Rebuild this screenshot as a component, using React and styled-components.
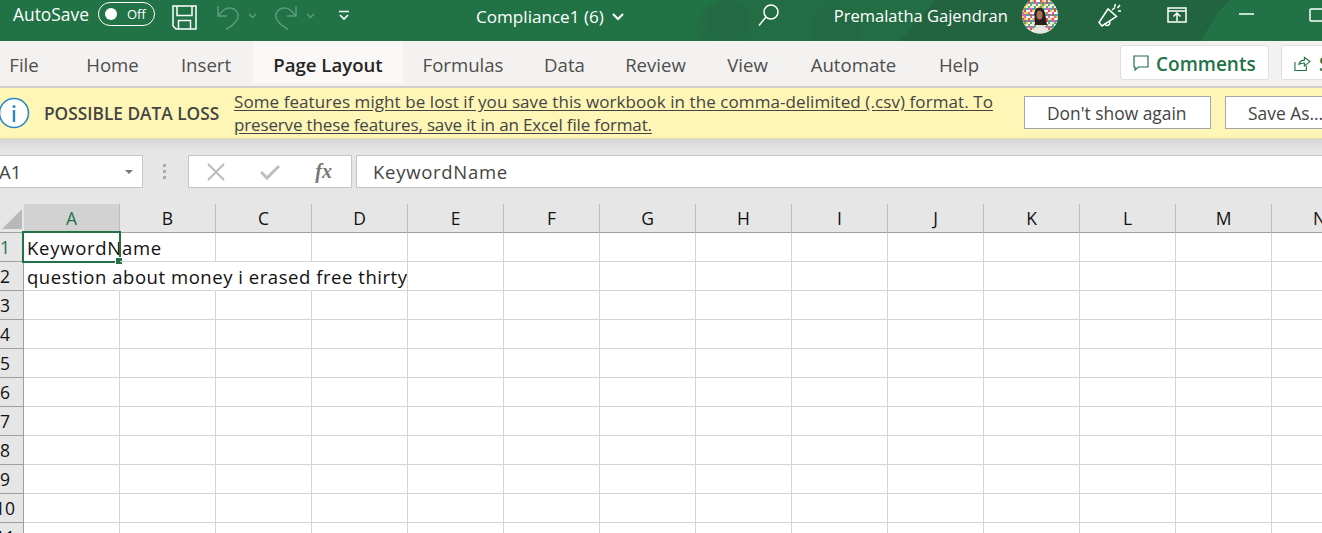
import React from "react";
import styled, { createGlobalStyle } from "styled-components";

const Global = createGlobalStyle`
  html, body { margin: 0; padding: 0; background: #fff; overflow: hidden; }
  #root { width: 1322px; height: 533px; overflow: hidden; }
  * { box-sizing: border-box; }
`;

const Page = styled.div`
  width: 1322px;
  height: 533px;
  overflow: hidden;
  display: flex;
  flex-direction: column;
  font-family: "Open Sans", "Noto Sans", "Liberation Sans", sans-serif;
`;

const TitleBar = styled.header`
  position: relative;
  flex: none;
  height: 41px;
  background: #217346;
  color: #fff;
  display: flex;
  align-items: flex-start;
  overflow: hidden;
`;
const TitleArt = styled.svg`
  position: absolute;
  inset: 0;
  width: 1322px;
  height: 41px;
`;
const TitleItem = styled.div`
  position: relative;
  flex: none;
  display: flex;
  align-items: center;
  margin-left: ${(p) => p.$left}px;
  margin-top: ${(p) => p.$top || 0}px;
  line-height: 1;
`;
const TitleText = styled.span`
  font-size: ${(p) => p.$size || 15}px;
  white-space: nowrap;
  color: #fff;
`;
const Toggle = styled.div`
  width: 57px;
  height: 24px;
  border: 1.5px solid #fff;
  border-radius: 12px;
  display: flex;
  align-items: center;
  padding-left: 6px;
  font-size: 13px;
  color: #fff;
`;
const Knob = styled.span`
  width: 12px;
  height: 12px;
  border-radius: 50%;
  background: #fff;
  margin-right: 10px;
`;

const Tabs = styled.nav`
  flex: none;
  height: 47px;
  background: #f3f2f1;
  border-bottom: 2px solid #d2d0ce;
  display: flex;
  align-items: flex-start;
`;
const Tab = styled.div`
  flex: none;
  height: 42px;
  width: ${(p) => p.$w}px;
  margin-left: ${(p) => p.$left}px;
  display: flex;
  align-items: center;
  justify-content: center;
  font-size: 18.6px;
  padding-top: 4px;
  font-weight: ${(p) => (p.$active ? 600 : 400)};
  color: ${(p) => (p.$active ? "#252423" : "#4f4e4d")};
  background: ${(p) => (p.$active ? "#f9f8f7" : "transparent")};
`;
const RibbonButton = styled.div`
  flex: none;
  margin-top: 4px;
  margin-left: ${(p) => p.$left}px;
  width: ${(p) => p.$w}px;
  height: 35px;
  background: #fff;
  border: 1px solid #e1dfdd;
  border-radius: 3px;
  display: flex;
  align-items: center;
  padding: 3px 0 0 12px;
  gap: ${(p) => p.$gap}px;
  font-size: 19px;
  font-weight: 600;
  color: #217346;
  & > svg {
    margin-top: -3px;
  }
`;

const Banner = styled.section`
  flex: none;
  height: 51px;
  background: #fdf6b7;
  border-bottom: 1px solid #e4dea6;
  display: flex;
  align-items: center;
  color: #444;
`;
const InfoMark = styled.svg`
  flex: none;
  width: 32px;
  height: 32px;
  margin-left: -2px;
`;
const BannerTitle = styled.strong`
  flex: none;
  margin-left: 14px;
  width: 190px;
  font-size: 17.3px;
  font-weight: 600;
  white-space: nowrap;
  color: #444;
`;
const BannerLink = styled.div`
  flex: none;
  width: 790px;
  font-size: 17px;
  letter-spacing: 0.08px;
  line-height: 23px;
  white-space: nowrap;
  text-decoration: underline;
  text-underline-offset: 2px;
  color: #444;
`;
const TightLine = styled.span`
  letter-spacing: -0.15px;
`;
const BannerButton = styled.div`
  flex: none;
  height: 33px;
  width: ${(p) => p.$w}px;
  margin-right: 14px;
  margin-top: -1px;
  padding-left: 22px;
  background: #fff;
  border: 1px solid #a6a6a6;
  display: flex;
  align-items: center;
  font-size: 17.4px;
  color: #444;
`;

const FormulaBar = styled.section`
  flex: none;
  height: 65px;
  background: linear-gradient(#d4d4d4 0, #e6e6e6 12px);
  padding-top: 16px;
  display: flex;
  align-items: flex-start;
`;
const Field = styled.div`
  flex: none;
  height: 33px;
  background: #fff;
  border: 1px solid #c6c6c6;
  display: flex;
  align-items: center;
  font-size: 18.5px;
  color: #444;
`;
const NameBox = styled(Field)`
  width: 144px;
  margin-left: -1px;
  border-left: none;
  justify-content: space-between;
  padding-right: 9px;
`;
const Caret = styled.span`
  width: 0;
  height: 0;
  border-left: 4px solid transparent;
  border-right: 4px solid transparent;
  border-top: 4px solid #777;
`;
const Grip = styled.span`
  flex: none;
  width: 42px;
  margin-right: 3px;
  height: 33px;
  display: flex;
  flex-direction: column;
  align-items: center;
  justify-content: center;
  gap: 3px;
  & > i {
    width: 3px;
    height: 3px;
    background: #aaa;
  }
`;
const FormulaButtons = styled(Field)`
  width: 164px;
  padding: 0 19px 0 18px;
  justify-content: space-between;
`;
const Fx = styled.span`
  font-family: "Liberation Serif", serif;
  font-style: italic;
  font-weight: 700;
  font-size: 20px;
  color: #777;
`;
const FormulaInput = styled(Field)`
  width: 970px;
  margin-left: 4px;
  border-right: none;
  padding-left: 16px;
  letter-spacing: 0.72px;
`;

const Sheet = styled.section`
  flex: 1;
  background: #fff;
  margin-left: -13px;
  font-size: 18.5px;
  color: #111;
  overflow: hidden;
`;
const Row = styled.div`
  display: flex;
  height: 29px;
`;
const HeadRow = styled(Row)`
  background: #e6e6e6;
`;
const Corner = styled.div`
  flex: none;
  width: 37px;
  height: 29px;
  border-bottom: 1px solid #9f9f9f;
  display: flex;
  justify-content: flex-end;
  align-items: flex-end;
  padding: 0 2px 3px 0;
`;
const ColHead = styled.div`
  flex: none;
  width: 96px;
  height: 29px;
  border-bottom: 1px solid #9f9f9f;
  border-right: 1px solid #bdbdbd;
  display: flex;
  align-items: center;
  justify-content: center;
  font-size: 17.5px;
  background: ${(p) => (p.$active ? "#d2d2d2" : "transparent")};
  color: ${(p) => (p.$active ? "#217346" : "#111")};
`;
const RowHead = styled.div`
  flex: none;
  width: 37px;
  height: 29px;
  background: #e6e6e6;
  border-right: 1px solid #9f9f9f;
  border-bottom: 1px solid #9f9f9f;
  display: flex;
  align-items: center;
  justify-content: center;
  font-size: 17.5px;
  color: ${(p) => (p.$active ? "#217346" : "#111")};
`;
const Cell = styled.div`
  position: relative;
  flex: none;
  width: 96px;
  height: 29px;
  border-bottom: 1px solid #d4d4d4;
  border-right: 1px solid ${(p) => (p.$open ? "transparent" : "#d4d4d4")};
  padding-left: 3px;
  display: flex;
  align-items: center;
  white-space: nowrap;
  letter-spacing: ${(p) => p.$spacing || 0.54}px;
`;
const Selection = styled.div`
  position: absolute;
  left: -2px;
  top: -2px;
  width: 99px;
  height: 32px;
  border: 2px solid #217346;
  &::after {
    content: "";
    position: absolute;
    right: -3px;
    bottom: -3px;
    width: 6px;
    height: 6px;
    background: #217346;
    outline: 1px solid #fff;
  }
`;

const Icon = styled.svg`
  display: block;
  flex: none;
  fill: none;
  stroke: ${(p) => p.$color || "#fff"};
  stroke-width: ${(p) => p.$sw || 1.5};
`;

const PALETTE = ["#d8343f", "#f2c230", "#2f8fd0", "#3aa35a", "#ffffff", "#e57a2c", "#d94f9b", "#f5e6c8", "#ffffff"];
const dots = [];
for (let y = 0; y < 18; y++) {
  for (let x = 0; x < 18; x++) {
    const seed = (x * x * 7 + y * y * 11 + x * y * 5 + x * 3 + y) % PALETTE.length;
    dots.push({ x: x * 2, y: y * 2, c: PALETTE[seed] });
  }
}

function Avatar() {
  return (
    <svg width="36" height="34" viewBox="0 0 36 34">
      <defs>
        <clipPath id="avatar-clip">
          <circle cx="18" cy="15.5" r="18" />
        </clipPath>
      </defs>
      <g clipPath="url(#avatar-clip)">
        <rect width="36" height="36" fill="#eee" />
        {dots.map((d) => (
          <rect key={`${d.x}-${d.y}`} x={d.x} y={d.y} width="2" height="2" fill={d.c} opacity="0.85" />
        ))}
        <path d="M12.5 14C12.5 6 22 6 23 13L25 25H13Z" fill="#2a1f1c" />
        <ellipse cx="17.5" cy="15" rx="3" ry="4.5" fill="#a87458" />
        <path d="M10 34C11 28 15 25 18 25C22 25 26 28 27 34Z" fill="#e8e6e3" />
      </g>
    </svg>
  );
}

const COLS = "ABCDEFGHIJKLMN".split("");
const ROWS = [1, 2, 3, 4, 5, 6, 7, 8, 9, 10, 11];

const TABS = [
  ["File", 48, 0],
  ["Home", 70, 29.5],
  ["Insert", 70, 23.5],
  ["Page Layout", 150, 12, true],
  ["Formulas", 90, 15],
  ["Data", 60, 26.5],
  ["Review", 80, 21],
  ["View", 60, 22],
  ["Automate", 100, 26],
  ["Help", 60, 25.5],
];

export default function App() {
  return (
    <Page>
      <Global />
      <TitleBar>
        <TitleArt viewBox="0 0 1322 41" aria-hidden="true">
          <path d="M700 41C690 25 700 0 730 0H1110C1120 15 1100 30 1130 41Z" fill="#236d44" />
          <path d="M900 41L935 0H1230C1215 12 1210 28 1200 41Z" fill="#22643f" />
          <path d="M1000 41L1010 0H1180L1150 41Z" fill="#22643f" />
          <circle cx="728" cy="22" r="22" fill="#236a42" />
          <circle cx="835" cy="30" r="24" fill="#236a42" />
        </TitleArt>
        <TitleItem $left={13} $top={6}>
          <TitleText $size={17.4}>AutoSave</TitleText>
        </TitleItem>
        <TitleItem $left={9} $top={2}>
          <Toggle>
            <Knob />
            Off
          </Toggle>
        </TitleItem>
        <TitleItem $left={17} $top={5}>
          <Icon width="25" height="25" viewBox="0 0 25 25">
            <path d="M1 1H24V24H4L1 21Z" />
            <path d="M5 1V10.5H20V1M6.5 24V15.5H18.5V24" />
          </Icon>
        </TitleItem>
        <TitleItem $left={19} $top={5}>
          <Icon width="24" height="25" viewBox="0 0 24 25" $color="#5c9b7a">
            <path d="M2 1V11H11M2 11L7 5.5C12 1 20 3 22 9C23.5 14 19 19 10 24.5" />
          </Icon>
        </TitleItem>
        <TitleItem $left={8} $top={13}>
          <Icon width="9" height="6" viewBox="0 0 9 6" $color="#5c9b7a">
            <path d="M1 1L4.5 4.5L8 1" />
          </Icon>
        </TitleItem>
        <TitleItem $left={17} $top={5}>
          <Icon width="24" height="25" viewBox="0 0 24 25" $color="#5c9b7a">
            <path d="M22 1V11H13M22 11L17 5.5C12 1 4 3 2 9C0.5 14 5 19 14 24.5" />
          </Icon>
        </TitleItem>
        <TitleItem $left={8} $top={13}>
          <Icon width="9" height="6" viewBox="0 0 9 6" $color="#5c9b7a">
            <path d="M1 1L4.5 4.5L8 1" />
          </Icon>
        </TitleItem>
        <TitleItem $left={23} $top={10}>
          <Icon width="12" height="11" viewBox="0 0 12 11" $sw={1.7}>
            <path d="M1 1.5H11M2 5L6 9L10 5" />
          </Icon>
        </TitleItem>
        <TitleItem $left={126} $top={8}>
          <TitleText $size={17.1}>Compliance1 (6)</TitleText>
        </TitleItem>
        <TitleItem $left={8} $top={13}>
          <Icon width="12" height="8" viewBox="0 0 12 8" $sw={2}>
            <path d="M1 1L6 6L11 1" />
          </Icon>
        </TitleItem>
        <TitleItem $left={134} $top={4}>
          <Icon width="21" height="22" viewBox="0 0 21 22">
            <circle cx="13" cy="8" r="7" />
            <path d="M8 13L1 21.5" />
          </Icon>
        </TitleItem>
        <TitleItem $left={55} $top={8}>
          <TitleText $size={16.5}>Premalatha Gajendran</TitleText>
        </TitleItem>
        <TitleItem $left={14} $top={0}>
          <Avatar />
        </TitleItem>
        <TitleItem $left={40} $top={3}>
          <Icon width="25" height="24" viewBox="0 0 25 24">
            <path d="M1 19.5L10 6L18.5 13.5L4 23Z" />
            <path d="M6.5 20.5C8 24 13 22.5 11.5 18" />
            <path d="M14 7L17 4.5M20 8H23M17.5 1L16.5 4M22 2L19.5 5" />
          </Icon>
        </TitleItem>
        <TitleItem $left={44} $top={7}>
          <Icon width="20" height="16" viewBox="0 0 20 16">
            <path d="M1 1H19V15H1ZM1 4H19" />
            <path d="M10 14V6.5M6.5 9.5L10 6L13.5 9.5" />
          </Icon>
        </TitleItem>
        <TitleItem $left={52} $top={13}>
          <Icon width="15" height="2" viewBox="0 0 15 2">
            <path d="M0 1H15" />
          </Icon>
        </TitleItem>
        <TitleItem $left={55} $top={8}>
          <Icon width="16" height="14" viewBox="0 0 16 14">
            <rect x="1" y="1" width="20" height="12" rx="1" />
          </Icon>
        </TitleItem>
      </TitleBar>

      <Tabs>
        {TABS.map(([label, w, left, active]) => (
          <Tab key={label} $w={w} $left={left} $active={active}>
            {label}
          </Tab>
        ))}
        <RibbonButton $left={131} $w={149} $gap={7}>
          <Icon width="16" height="16" viewBox="0 0 16 16" $color="#217346" $sw={1.2}>
            <path d="M1 1H15V12H5.5L2 15V12H1Z" />
          </Icon>
          Comments
        </RibbonButton>
        <RibbonButton $left={12} $w={80} $gap={8}>
          <Icon width="17" height="18" viewBox="0 0 18 18" $color="#217346" $sw={1.2}>
            <path d="M1 8V17H13V12M5 11C6 7 9 6 11 6V3L17 7.5L11 12V9C8 9 6 9.5 5 11Z" />
          </Icon>
          S
        </RibbonButton>
      </Tabs>

      <Banner>
        <InfoMark viewBox="0 0 32 32">
          <circle cx="16" cy="16" r="14.5" fill="#fff" stroke="#2b88c8" strokeWidth="1.6" />
          <circle cx="16" cy="9.5" r="1.5" fill="#2b88c8" />
          <rect x="14.8" y="13" width="2.4" height="12" fill="#2b88c8" />
        </InfoMark>
        <BannerTitle>POSSIBLE DATA LOSS</BannerTitle>
        <BannerLink>
          Some features might be lost if you save this workbook in the comma-delimited (.csv) format. To
          <br />
          <TightLine>preserve these features, save it in an Excel file format.</TightLine>
        </BannerLink>
        <BannerButton $w={187}>Don't show again</BannerButton>
        <BannerButton $w={130}>Save As...</BannerButton>
      </Banner>

      <FormulaBar>
        <NameBox>
          A1
          <Caret />
        </NameBox>
        <Grip>
          <i />
          <i />
          <i />
        </Grip>
        <FormulaButtons>
          <Icon width="18" height="18" viewBox="0 0 18 18" $color="#bdbdbd" $sw={2}>
            <path d="M1 1L17 17M17 1L1 17" />
          </Icon>
          <Icon width="20" height="16" viewBox="0 0 20 16" $color="#bdbdbd" $sw={3}>
            <path d="M1 8L7 14L19 2" />
          </Icon>
          <Fx>fx</Fx>
        </FormulaButtons>
        <FormulaInput>KeywordName</FormulaInput>
      </FormulaBar>

      <Sheet>
        <HeadRow>
          <Corner>
            <svg width="20" height="20" viewBox="0 0 20 20">
              <path d="M20 0V20H0Z" fill="#b9b9b9" />
            </svg>
          </Corner>
          {COLS.map((c, i) => (
            <ColHead key={c} $active={i === 0}>
              {c}
            </ColHead>
          ))}
        </HeadRow>
        {ROWS.map((r) => (
          <Row key={r}>
            <RowHead $active={r === 1}>{r}</RowHead>
            {COLS.map((c, i) => (
              <Cell
                key={c}
                $spacing={r === 1 ? 0.72 : 0.54}
                $open={(r === 2 && i < 3) || (r === 1 && i === 0)}
              >
                {r === 1 && i === 0 && "KeywordName"}
                {r === 2 && i === 0 && "question about money i erased free thirty"}
                {r === 1 && i === 0 && <Selection />}
              </Cell>
            ))}
          </Row>
        ))}
      </Sheet>
    </Page>
  );
}
